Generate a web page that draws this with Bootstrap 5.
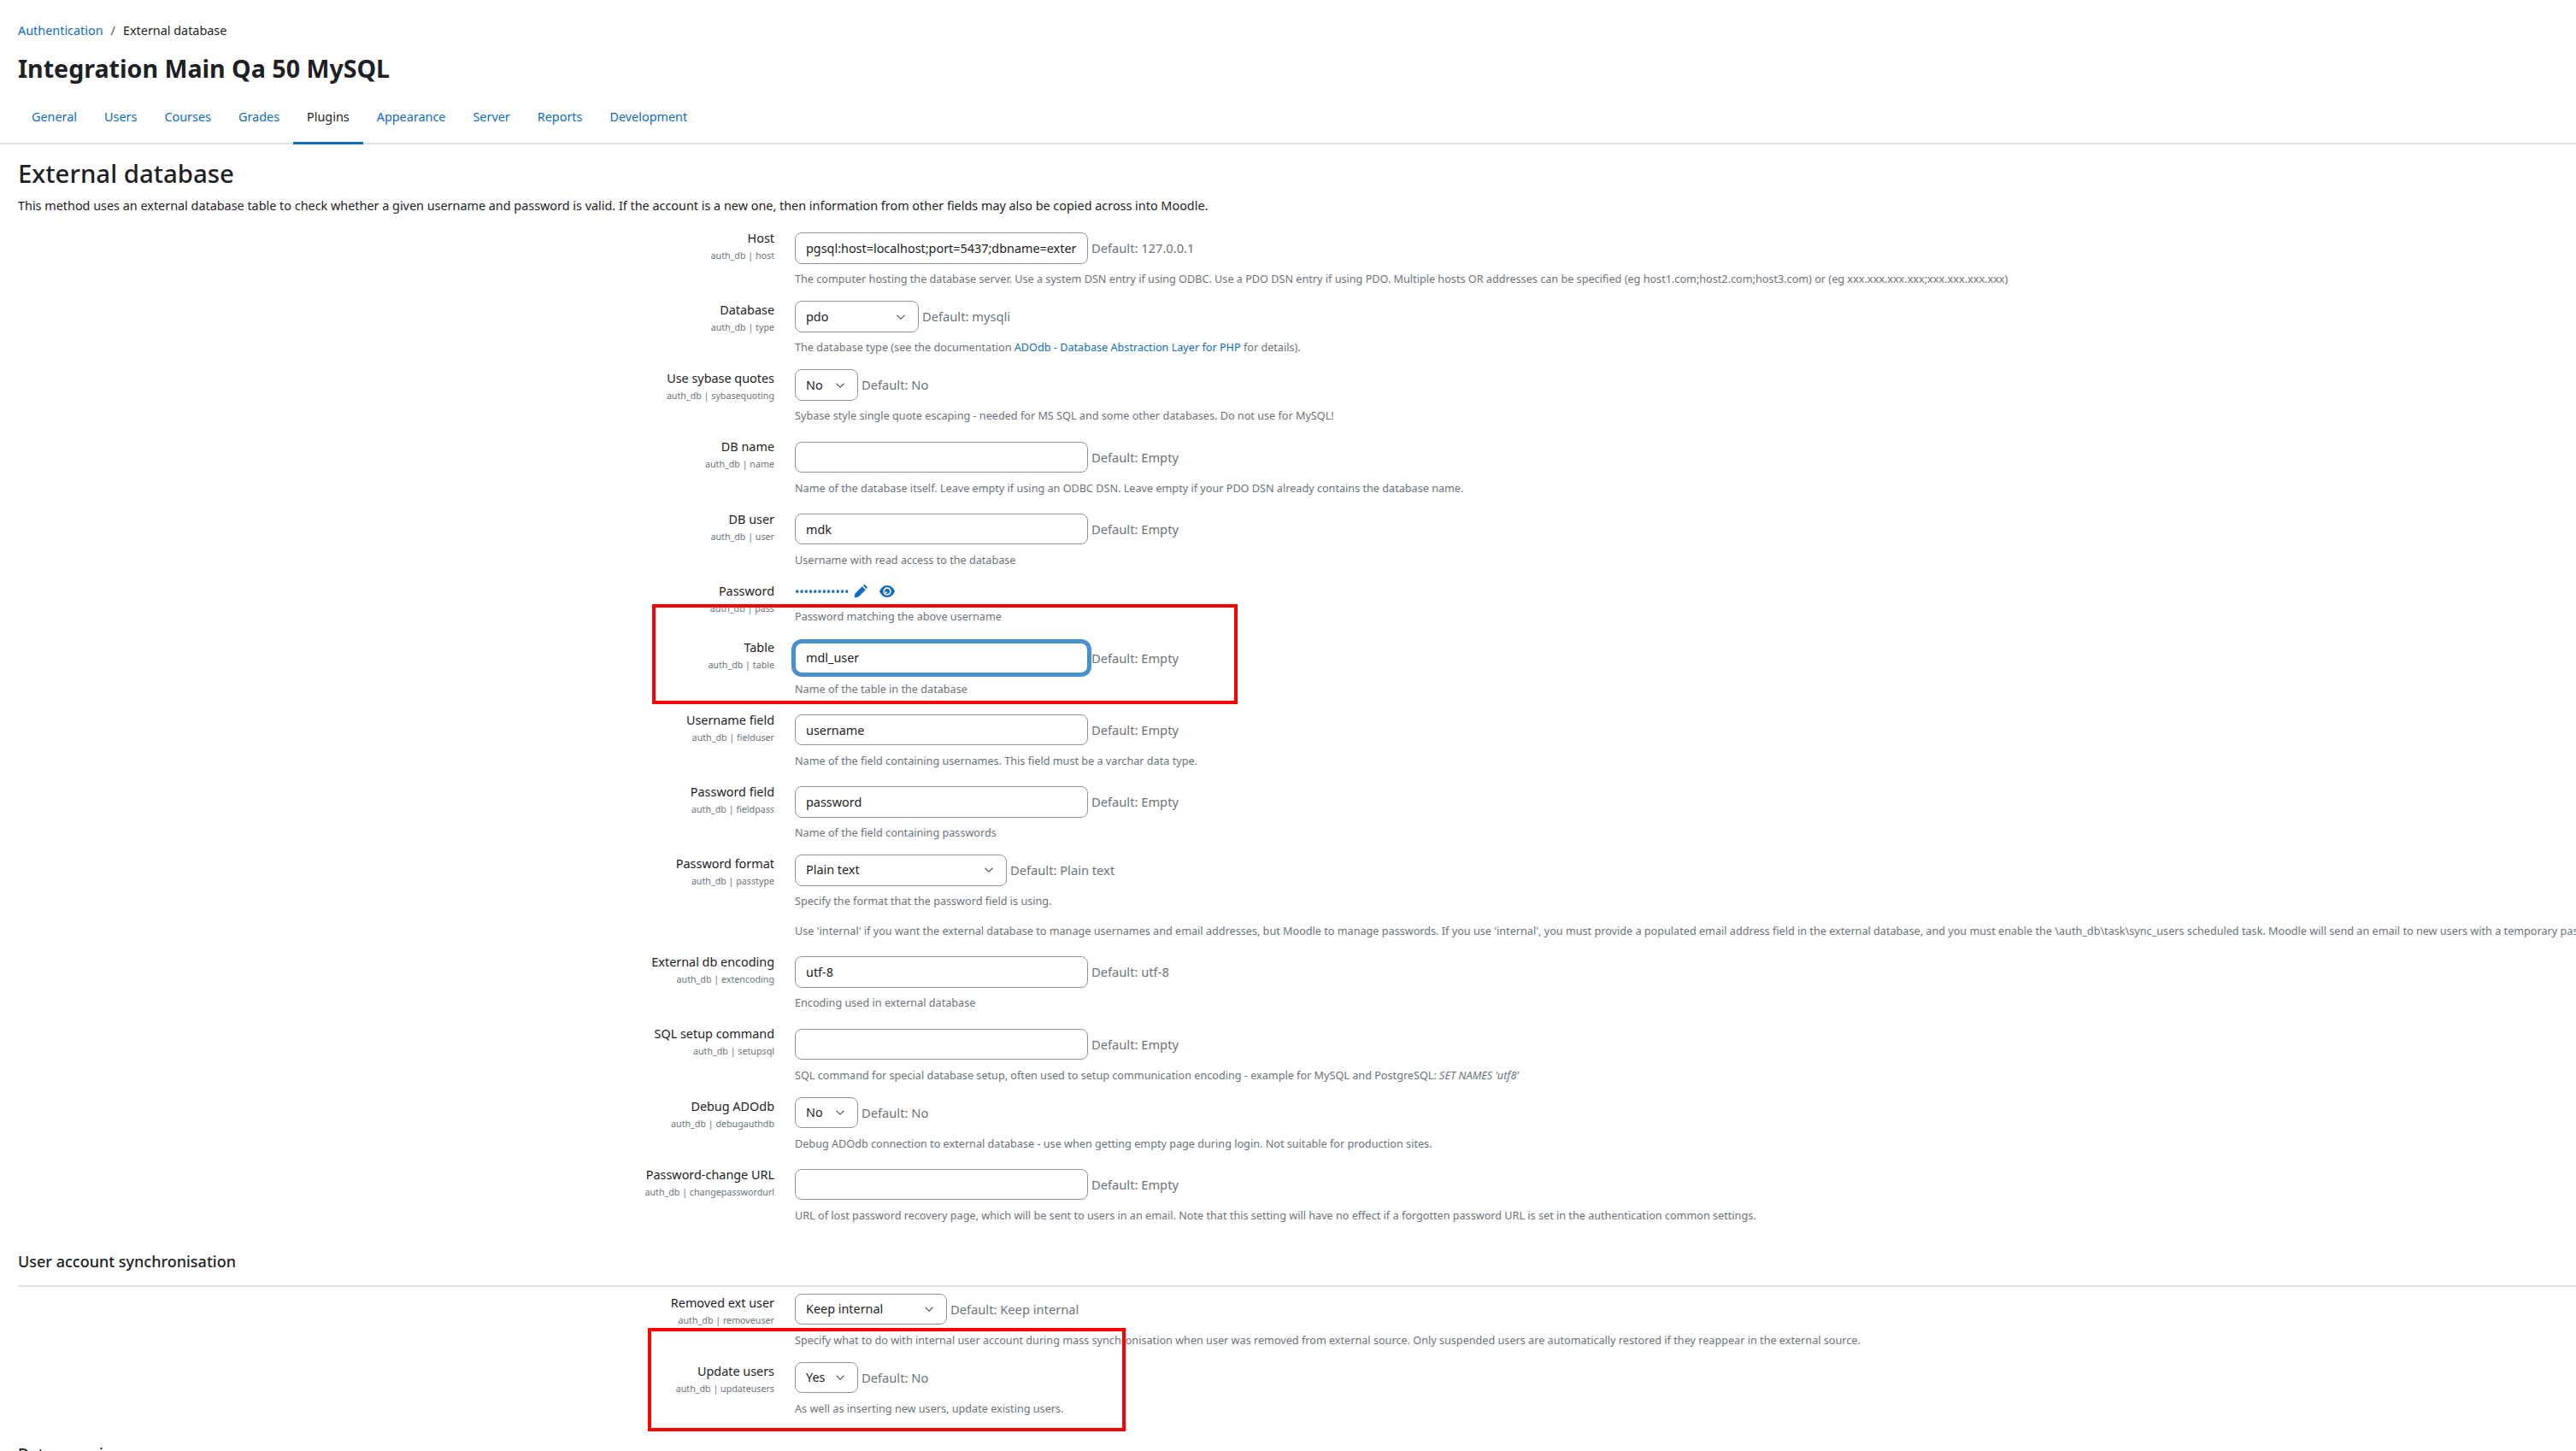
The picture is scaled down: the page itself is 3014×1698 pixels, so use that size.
<!DOCTYPE html>
<html lang="en">

<head>
    <meta charset="UTF-8">
    <title>External database</title>
    <link href="https://cdn.jsdelivr.net/npm/bootstrap@5.3.0/dist/css/bootstrap.min.css" rel="stylesheet">
    <style>
        html, body { overflow: hidden; height: 1698px; }
        body { font-family: "Noto Sans", sans-serif; font-size: 14.4px; color: #1d2125; position: relative; }
        a { color: #0f6cbf; text-decoration: none; }
        .crumbs { padding: 25px 21px 0; line-height: 22px; font-size: 14.4px; margin: 0; }
        .crumbs .sep { color: #495057; padding: 0 9px; }
        .site-title { font-size: 28.6px; font-weight: 700; margin: 16px 0 0 21px; line-height: 34px; }
        .admin-tabs { margin-top: 29px; padding-left: 21px; border-bottom: 2px solid #dee2e6; height: 43px; }
        .admin-tabs .nav-link { padding: 0 16px; height: 43px; line-height: 22px; color: #0f6cbf; font-size: 14.4px; border-radius: 0; }
        .admin-tabs .nav-link.active { color: #1d2125; border-bottom: 3px solid #0f6cbf; }
        .page-head { font-size: 29.4px; font-weight: 500; margin: 17px 0 0 21px; line-height: 34px; }
        .page-intro { margin: 11px 0 17px 21px; line-height: 20px; font-size: 14.4px; white-space: nowrap; }
        .setting { display: flex; padding-bottom: 17px; }
        .setting-label { width: 906px; flex: none; text-align: right; }
        .setting-name { line-height: 22px; font-size: 14.4px; }
        .setting-key { line-height: 18px; font-size: 10.7px; color: #6a737b; }
        .setting-body { margin-left: 24px; white-space: nowrap; }
        .setting-body.has-input { padding-top: 4.25px; }
        .setting-line { display: flex; align-items: center; gap: 4px; height: 36.5px; }
        .setting-line .form-control, .setting-line .form-select { font-family: inherit; font-size: 14.4px; color: #1d2125; border-color: #8f959e; border-radius: 8px; height: 36.5px; }
        .setting-line .form-select { background-image: url("data:image/svg+xml,%3csvg xmlns='http://www.w3.org/2000/svg' viewBox='0 0 16 16'%3e%3cpath fill='none' stroke='%23343a40' stroke-linecap='round' stroke-linejoin='round' stroke-width='1.4' d='m2.5 5.5 5.5 5.5 5.5-5.5'/%3e%3c/svg%3e"); }
        .field-wide { width: 343px; }
        .field-pdo { width: 145px; }
        .field-no { width: 74px; }
        .field-plain { width: 248px; }
        .field-keep { width: 178px; }
        .setting-line .field-focus { border-color: #4a90d0; box-shadow: 0 0 0 4px #4a90d0; }
        .default-info { font-size: 14.7px; color: #6a737b; }
        .setting-desc { font-size: 12.65px; color: #6a737b; line-height: 18px; margin: 8.5px 0 0; }
        .setting-desc + .setting-desc { margin-top: 17px; }
        .pass-line { display: flex; align-items: center; gap: 6px; height: 23px; }
        .pass-dots { font-size: 14px; color: #0f6cbf; }
        .pass-edit { width: 16px; height: 16px; fill: #0f6cbf; }
        .pass-eye { width: 18px; height: 14px; margin-left: 8px; fill: #0f6cbf; }
        .section-head { font-size: 18px; font-weight: 500; line-height: 22px; margin: 17px 0 0 21px; }
        .section-rule { margin: 17px 0 8px 21px; border-top: 2px solid #dee2e6; opacity: 1; }
        .section-last { margin-top: 16px; }
        .red-box { position: absolute; border: 4px solid #ff0000; }
        .red-box-a { left: 763px; top: 707px; width: 685px; height: 117px; }
        .red-box-b { left: 758px; top: 1554px; width: 559px; height: 121px; }
    </style>
</head>

<body>
    <p class="crumbs"><a href="#">Authentication</a><span class="sep">/</span>External database</p>
    <h1 class="site-title">Integration Main Qa 50 MySQL</h1>
    <ul class="nav admin-tabs">
        <li class="nav-item"><a class="nav-link" href="#">General</a></li>
        <li class="nav-item"><a class="nav-link" href="#">Users</a></li>
        <li class="nav-item"><a class="nav-link" href="#">Courses</a></li>
        <li class="nav-item"><a class="nav-link" href="#">Grades</a></li>
        <li class="nav-item"><a class="nav-link active" href="#">Plugins</a></li>
        <li class="nav-item"><a class="nav-link" href="#">Appearance</a></li>
        <li class="nav-item"><a class="nav-link" href="#">Server</a></li>
        <li class="nav-item"><a class="nav-link" href="#">Reports</a></li>
        <li class="nav-item"><a class="nav-link" href="#">Development</a></li>
    </ul>
    <h2 class="page-head">External database</h2>
    <p class="page-intro">This method uses an external database table to check whether a given username and password is valid. If the account is a new one, then information from other fields may also be copied across into Moodle.</p>

    <div class="setting">
        <div class="setting-label"><div class="setting-name">Host</div><div class="setting-key">auth_db | host</div></div>
        <div class="setting-body has-input">
            <div class="setting-line"><input class="form-control field-wide" type="text" value="pgsql:host=localhost;port=5437;dbname=external"><span class="default-info">Default: 127.0.0.1</span></div>
            <p class="setting-desc">The computer hosting the database server. Use a system DSN entry if using ODBC. Use a PDO DSN entry if using PDO. Multiple hosts OR addresses can be specified (eg host1.com;host2.com;host3.com) or (eg xxx.xxx.xxx.xxx;xxx.xxx.xxx.xxx)</p>
        </div>
    </div>
    <div class="setting">
        <div class="setting-label"><div class="setting-name">Database</div><div class="setting-key">auth_db | type</div></div>
        <div class="setting-body">
            <div class="setting-line"><select class="form-select field-pdo"><option>pdo</option></select><span class="default-info">Default: mysqli</span></div>
            <p class="setting-desc">The database type (see the documentation <a href="#">ADOdb - Database Abstraction Layer for PHP</a> for details).</p>
        </div>
    </div>
    <div class="setting">
        <div class="setting-label"><div class="setting-name">Use sybase quotes</div><div class="setting-key">auth_db | sybasequoting</div></div>
        <div class="setting-body">
            <div class="setting-line"><select class="form-select field-no"><option>No</option></select><span class="default-info">Default: No</span></div>
            <p class="setting-desc">Sybase style single quote escaping - needed for MS SQL and some other databases. Do not use for MySQL!</p>
        </div>
    </div>
    <div class="setting">
        <div class="setting-label"><div class="setting-name">DB name</div><div class="setting-key">auth_db | name</div></div>
        <div class="setting-body has-input">
            <div class="setting-line"><input class="form-control field-wide" type="text" value=""><span class="default-info">Default: Empty</span></div>
            <p class="setting-desc">Name of the database itself. Leave empty if using an ODBC DSN. Leave empty if your PDO DSN already contains the database name.</p>
        </div>
    </div>
    <div class="setting">
        <div class="setting-label"><div class="setting-name">DB user</div><div class="setting-key">auth_db | user</div></div>
        <div class="setting-body has-input">
            <div class="setting-line"><input class="form-control field-wide" type="text" value="mdk"><span class="default-info">Default: Empty</span></div>
            <p class="setting-desc">Username with read access to the database</p>
        </div>
    </div>
    <div class="setting">
        <div class="setting-label"><div class="setting-name">Password</div><div class="setting-key">auth_db | pass</div></div>
        <div class="setting-body">
            <div class="pass-line">
                <span class="pass-dots">••••••••••••</span>
                <svg class="pass-edit" viewBox="0 0 16 16"><path d="M0.5 15.5l1-5L9.8 2.2l4 4L5.5 14.5z"/><path d="M10.8 1.2l.7-.6c.6-.5 1.2-.5 1.7 0l2.2 2.2c.5.5.5 1.1 0 1.7l-.6.7z"/></svg>
                <svg class="pass-eye" viewBox="0 0 18 14"><path d="M9 0C5 0 1.8 2.8 0 7c1.8 4.2 5 7 9 7s7.2-2.8 9-7c-1.800-4.200-5-7-9-7z"/><circle cx="9" cy="7" r="4.700" fill="#fff"/><circle cx="9" cy="7" r="3"/><circle cx="7.800" cy="8.200" r="1" fill="#fff"/></svg>
            </div>
            <p class="setting-desc">Password matching the above username</p>
        </div>
    </div>
    <div class="setting">
        <div class="setting-label"><div class="setting-name">Table</div><div class="setting-key">auth_db | table</div></div>
        <div class="setting-body has-input">
            <div class="setting-line"><input class="form-control field-wide field-focus" type="text" value="mdl_user"><span class="default-info">Default: Empty</span></div>
            <p class="setting-desc">Name of the table in the database</p>
        </div>
    </div>
    <div class="setting">
        <div class="setting-label"><div class="setting-name">Username field</div><div class="setting-key">auth_db | fielduser</div></div>
        <div class="setting-body has-input">
            <div class="setting-line"><input class="form-control field-wide" type="text" value="username"><span class="default-info">Default: Empty</span></div>
            <p class="setting-desc">Name of the field containing usernames. This field must be a varchar data type.</p>
        </div>
    </div>
    <div class="setting">
        <div class="setting-label"><div class="setting-name">Password field</div><div class="setting-key">auth_db | fieldpass</div></div>
        <div class="setting-body has-input">
            <div class="setting-line"><input class="form-control field-wide" type="text" value="password"><span class="default-info">Default: Empty</span></div>
            <p class="setting-desc">Name of the field containing passwords</p>
        </div>
    </div>
    <div class="setting">
        <div class="setting-label"><div class="setting-name">Password format</div><div class="setting-key">auth_db | passtype</div></div>
        <div class="setting-body">
            <div class="setting-line"><select class="form-select field-plain"><option>Plain text</option></select><span class="default-info">Default: Plain text</span></div>
            <p class="setting-desc">Specify the format that the password field is using.</p>
            <p class="setting-desc">Use 'internal' if you want the external database to manage usernames and email addresses, but Moodle to manage passwords. If you use 'internal', you must provide a populated email address field in the external database, and you must enable the \auth_db\task\sync_users scheduled task. Moodle will send an email to new users with a temporary password.</p>
        </div>
    </div>
    <div class="setting">
        <div class="setting-label"><div class="setting-name">External db encoding</div><div class="setting-key">auth_db | extencoding</div></div>
        <div class="setting-body has-input">
            <div class="setting-line"><input class="form-control field-wide" type="text" value="utf-8"><span class="default-info">Default: utf-8</span></div>
            <p class="setting-desc">Encoding used in external database</p>
        </div>
    </div>
    <div class="setting">
        <div class="setting-label"><div class="setting-name">SQL setup command</div><div class="setting-key">auth_db | setupsql</div></div>
        <div class="setting-body has-input">
            <div class="setting-line"><input class="form-control field-wide" type="text" value=""><span class="default-info">Default: Empty</span></div>
            <p class="setting-desc">SQL command for special database setup, often used to setup communication encoding - example for MySQL and PostgreSQL: <em>SET NAMES 'utf8'</em></p>
        </div>
    </div>
    <div class="setting">
        <div class="setting-label"><div class="setting-name">Debug ADOdb</div><div class="setting-key">auth_db | debugauthdb</div></div>
        <div class="setting-body">
            <div class="setting-line"><select class="form-select field-no"><option>No</option></select><span class="default-info">Default: No</span></div>
            <p class="setting-desc">Debug ADOdb connection to external database - use when getting empty page during login. Not suitable for production sites.</p>
        </div>
    </div>
    <div class="setting">
        <div class="setting-label"><div class="setting-name">Password-change URL</div><div class="setting-key">auth_db | changepasswordurl</div></div>
        <div class="setting-body has-input">
            <div class="setting-line"><input class="form-control field-wide" type="text" value=""><span class="default-info">Default: Empty</span></div>
            <p class="setting-desc">URL of lost password recovery page, which will be sent to users in an email. Note that this setting will have no effect if a forgotten password URL is set in the authentication common settings.</p>
        </div>
    </div>

    <h3 class="section-head">User account synchronisation</h3>
    <hr class="section-rule">

    <div class="setting">
        <div class="setting-label"><div class="setting-name">Removed ext user</div><div class="setting-key">auth_db | removeuser</div></div>
        <div class="setting-body">
            <div class="setting-line"><select class="form-select field-keep"><option>Keep internal</option></select><span class="default-info">Default: Keep internal</span></div>
            <p class="setting-desc">Specify what to do with internal user account during mass synchronisation when user was removed from external source. Only suspended users are automatically restored if they reappear in the external source.</p>
        </div>
    </div>
    <div class="setting">
        <div class="setting-label"><div class="setting-name">Update users</div><div class="setting-key">auth_db | updateusers</div></div>
        <div class="setting-body">
            <div class="setting-line"><select class="form-select field-no"><option>Yes</option></select><span class="default-info">Default: No</span></div>
            <p class="setting-desc">As well as inserting new users, update existing users.</p>
        </div>
    </div>
    <h3 class="section-head section-last">Data mapping</h3>

    <div class="red-box red-box-a"></div>
    <div class="red-box red-box-b"></div>

    <script src="https://cdn.jsdelivr.net/npm/bootstrap@5.3.0/dist/js/bootstrap.bundle.min.js"></script>
</body>

</html>
